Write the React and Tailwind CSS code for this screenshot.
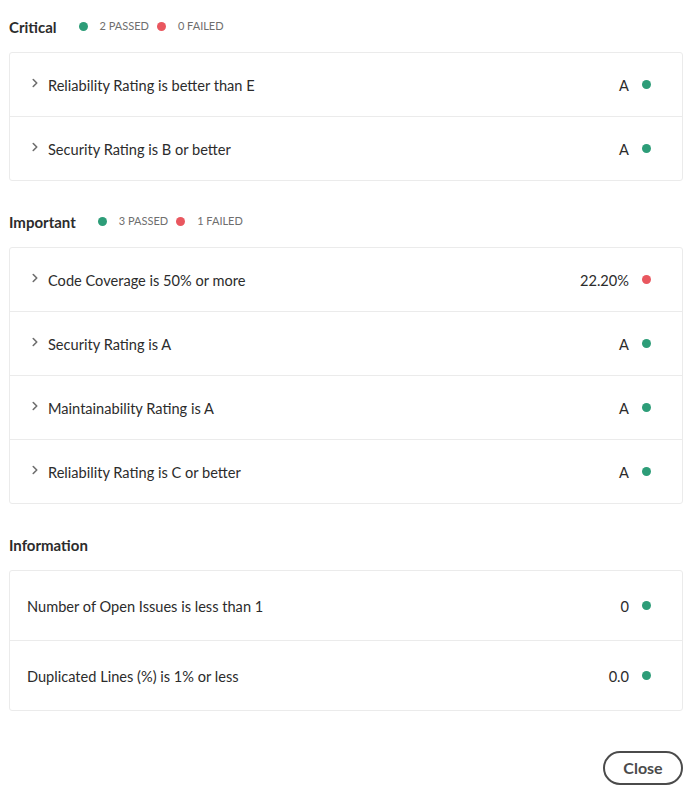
import {ChevronRight} from 'lucide-react';

const sections = [
  {
    title: 'Critical',
    passed: 2,
    failed: 0,
    expandable: true,
    rows: [
      {label: 'Reliability Rating is better than E', value: 'A', ok: true},
      {label: 'Security Rating is B or better', value: 'A', ok: true},
    ],
  },
  {
    title: 'Important',
    passed: 3,
    failed: 1,
    expandable: true,
    rows: [
      {label: 'Code Coverage is 50% or more', value: '22.20%', ok: false},
      {label: 'Security Rating is A', value: 'A', ok: true},
      {label: 'Maintainability Rating is A', value: 'A', ok: true},
      {label: 'Reliability Rating is C or better', value: 'A', ok: true},
    ],
  },
  {
    title: 'Information',
    expandable: false,
    rows: [
      {label: 'Number of Open Issues is less than 1', value: '0', ok: true},
      {label: 'Duplicated Lines (%) is 1% or less', value: '0.0', ok: true},
    ],
  },
];

function Dot({ok}) {
  return (
    <span
      className={`inline-block rounded-full w-[9px] h-[9px] ${
        ok ? 'bg-[#2d9d78]' : 'bg-[#e9575f]'
      }`}
    />
  );
}

function Row({row, expandable}) {
  return (
    <div
      className={`flex items-center justify-between pr-[31px] border-b border-[#ebebeb] last:border-b-0 ${
        expandable ? 'h-[64px] last:h-[63px] pl-[18px]' : 'h-[70px] last:h-[69px] pl-[17px]'
      }`}
    >
      <div className="flex items-center pt-[2px]">
        {expandable && (
          <ChevronRight className="w-[14px] h-[14px] text-[#6e6e6e] mr-[6px] -mt-[4px]" strokeWidth={2.75} />
        )}
        <span className="text-[14.6px] text-[#2c2c2c]">{row.label}</span>
      </div>
      <div className="flex items-center gap-[13px] pt-[2px]">
        <span className="text-[14.6px] text-[#2c2c2c]">{row.value}</span>
        <span className="-mt-[2px] flex">
          <Dot ok={row.ok} />
        </span>
      </div>
    </div>
  );
}

function Section({section}) {
  return (
    <div>
      <div className="flex items-center h-[20px] mb-[15px]">
        <h3 className="text-[15px] font-bold text-[#2c2c2c] mr-[22px]">{section.title}</h3>
        {section.passed !== undefined && (
          <div className="flex items-center text-[11px] text-[#6e6e6e] -mt-[2px]">
            <Dot ok />
            <span className="ml-[12px] mr-[8px]">{section.passed} PASSED</span>
            <Dot ok={false} />
            <span className="ml-[12px]">{section.failed} FAILED</span>
          </div>
        )}
      </div>
      <div className="border border-[#ebebeb] rounded-[3px] bg-white">
        {section.rows.map((row) => (
          <Row key={row.label} row={row} expandable={section.expandable} />
        ))}
      </div>
    </div>
  );
}

export default function App() {
  return (
    <div
      className="w-[700px] h-[802px] bg-white px-[9px] pt-[17px] flex flex-col"
      style={{fontFamily: 'Lato, "Liberation Sans", sans-serif'}}
    >
      <div className="flex flex-col gap-[31px] pr-[8px]">
        {sections.map((s) => (
          <Section key={s.title} section={s} />
        ))}
      </div>
      <div className="flex justify-end pr-[8px] mt-[40px]">
        <button className="w-[80px] h-[34px] rounded-full border-2 border-[#4b4b4b] text-[16px] font-bold text-[#4b4b4b]">
          Close
        </button>
      </div>
    </div>
  );
}
